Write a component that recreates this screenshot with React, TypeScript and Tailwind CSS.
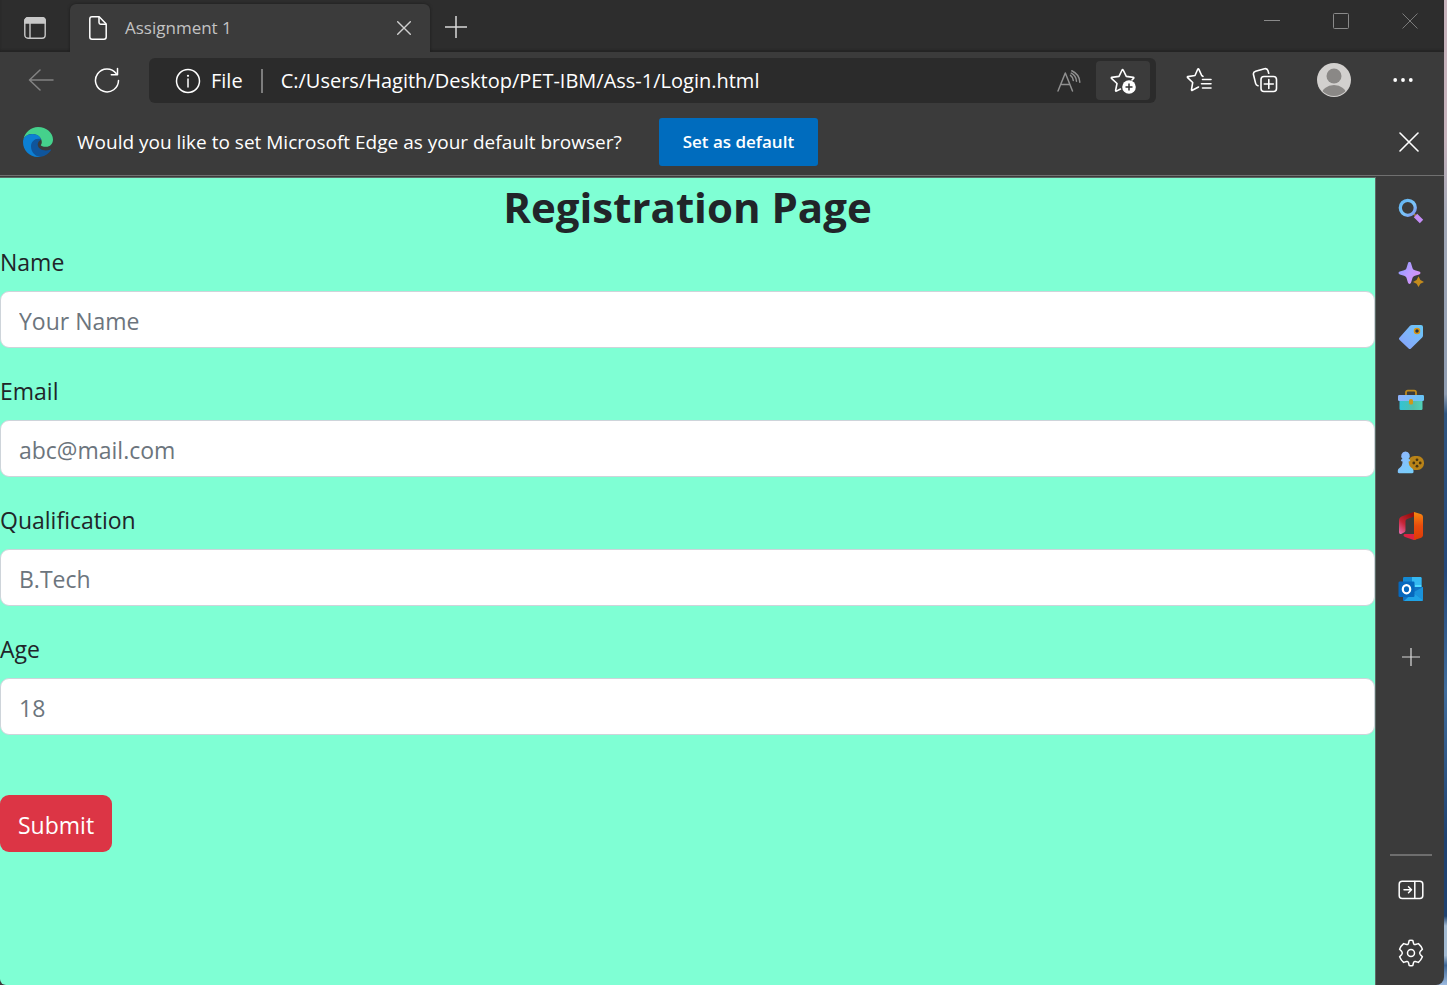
import type { ReactNode } from "react";

function TabMenuIcon() {
  return (
    <svg width="22" height="22" viewBox="0 0 22 22" fill="none" stroke="#c8c8c8" strokeWidth="1.4">
      <rect x="0.8" y="0.8" width="20.4" height="20.4" rx="3.2" />
      <path d="M0.8 6V4A3.2 3.2 0 0 1 4 .8h14A3.2 3.2 0 0 1 21.2 4v2Z" fill="#c8c8c8" />
      <path d="M6 6v15" />
    </svg>
  );
}

function FileIcon() {
  return (
    <svg width="18" height="24" viewBox="0 0 18 24" fill="none" stroke="#fff" strokeWidth="1.5" strokeLinejoin="round">
      <path d="M3 .8h7.2L17.2 8v13a2.2 2.2 0 0 1-2.2 2.2H3A2.2 2.2 0 0 1 .8 21V3A2.2 2.2 0 0 1 3 .8Z" />
      <path d="M10 1v5.5A1.7 1.7 0 0 0 11.700 8.200H17" />
    </svg>
  );
}

function Cross({ size, color, width }: { size: number; color: string; width: number }) {
  return (
    <svg width={size} height={size} viewBox="0 0 20 20" stroke={color} strokeWidth={width} strokeLinecap="round">
      <path d="M1 1l18 18M19 1L1 19" />
    </svg>
  );
}

function Plus({ size }: { size: number }) {
  return (
    <svg width={size} height={size} viewBox="0 0 22 22" stroke="#d8d8d8" strokeWidth="1.500">
      <path d="M11 0v22M0 11h22" />
    </svg>
  );
}

function BackIcon() {
  return (
    <svg width="26" height="22" viewBox="0 0 26 22" fill="none" stroke="#838383" strokeWidth="1.500" strokeLinecap="round" strokeLinejoin="round">
      <path d="M25 11H1.500M12 1L1.500 11L12 21" />
    </svg>
  );
}

function ReloadIcon() {
  return (
    <svg width="26" height="26" viewBox="0 0 26 26" fill="none" stroke="#fff" strokeWidth="1.500" strokeLinecap="round" strokeLinejoin="round">
      <path d="M24.500 13.500A11.500 11.500 0 1 1 22.200 6.500" />
      <path d="M23.500 1.500v6.200h-6.200" />
    </svg>
  );
}

function InfoIcon() {
  return (
    <svg width="26" height="26" viewBox="0 0 26 26" fill="none" stroke="#fff" strokeWidth="1.500">
      <circle cx="13" cy="13" r="11.500" />
      <path d="M13 11v8" strokeLinecap="round" />
      <circle cx="13" cy="7.800" r="1.100" fill="#fff" stroke="none" />
    </svg>
  );
}

function ReadAloudIcon() {
  return (
    <svg width="24" height="22" viewBox="0 0 24 22" fill="none" stroke="#909090" strokeWidth="1.500" strokeLinecap="round" strokeLinejoin="round">
      <path d="M1 21L8.300 3L15.500 21M3.700 14.500h9.200" />
      <path d="M13.500 5.300c1.700 1.200 2.700 3 2.800 5.200" />
      <path d="M14.800 .8c4.700 2.200 7.800 6.400 8 11.400" />
      <path d="M14.200 3.200c3.200 1.600 5 4.300 5.300 8" />
    </svg>
  );
}

function StarAddIcon() {
  return (
    <svg width="26" height="26" viewBox="0 0 26 26" fill="none">
      <path
        d="M10.500 21L6.400 23.100c-.5.200-.9 0-.8-.6L7 15.500L1.500 10.400c-.4-.4-.2-.9.300-1L9 8.400L12.100 2c.3-.5.900-.5 1.100 0L16.300 8.400L23.300 9.400c.6.1.8.6.3 1L22 12"
        stroke="#fff"
        strokeWidth="1.600"
        strokeLinecap="round"
        strokeLinejoin="round"
      />
      <circle cx="19" cy="19" r="6.800" fill="#fff" />
      <path d="M19 15.500v7M15.500 19h7" stroke="#333" strokeWidth="1.500" />
    </svg>
  );
}

function FavoritesIcon() {
  return (
    <svg width="26" height="26" viewBox="0 0 26 26" fill="none" stroke="#fff" strokeWidth="1.600" strokeLinecap="round" strokeLinejoin="round">
      <path d="M17 9.400L15.700 8.500L12.900 2.300c-.3-.6-.9-.6-1.200 0L9 8.500L1.900 9.600c-.6.100-.7.600-.3 1L6.700 15.500L5.500 22.700c-.1.600.3.900.8.600L12.500 20" />
      <path d="M16.500 12.500h8.500M15.500 16.800h9.500M16.500 21h8.500" />
    </svg>
  );
}

function CollectionsIcon() {
  return (
    <svg width="26" height="26" viewBox="0 0 26 26" fill="none" stroke="#fff" strokeWidth="1.600" strokeLinecap="round" strokeLinejoin="round">
      <rect x="9" y="9.500" width="15.500" height="15" rx="3" />
      <path d="M16.800 12.500v9M12.300 17h9" />
      <path d="M6 18.800C4.800 18.500 4 17.800 3.700 16.600L1.500 7.700C1.100 6 2 4.700 3.600 4.200L12.500 1.800c1.700-.4 3 .3 3.500 2l.7 2.500" />
    </svg>
  );
}

function Avatar() {
  return (
    <svg width="34" height="34" viewBox="0 0 34 34">
      <defs>
        <clipPath id="avatar-clip">
          <circle cx="17" cy="17" r="16" />
        </clipPath>
      </defs>
      <circle cx="17" cy="17" r="17" fill="#d2d0ce" />
      <circle cx="17" cy="13" r="7.500" fill="#8a8886" />
      <ellipse cx="17" cy="32" rx="12.500" ry="10" fill="#8a8886" clipPath="url(#avatar-clip)" />
    </svg>
  );
}

function DotsIcon() {
  return (
    <svg width="20" height="6" viewBox="0 0 20 6" fill="#fff">
      <circle cx="2.200" cy="3" r="1.900" />
      <circle cx="10" cy="3" r="1.900" />
      <circle cx="17.800" cy="3" r="1.900" />
    </svg>
  );
}

function EdgeLogo() {
  return (
    <svg width="30" height="30" viewBox="0 0 30 30">
      <path
        d="M.5 12C2 5 8 0 15 0c8.500 0 15 6 15 12.500 0 4.500-3 7.300-7 7.300-3 0-5-.6-5.200-1.500-.1-.5 1-1 1-3.300C18.800 11 15 7 9.500 7 5 7 2 9 .5 12Z"
        fill="#45d18c"
      />
      <path d="M0 15C0 10 4 7 9.500 7c5 0 8.200 3 8.700 5.700C15 11.500 9 12.500 9 19c0 6 4.500 10 9 10.700-1 .3-2 .3-3 .3C6 30 0 23 0 15Z" fill="#0c80d4" />
      <path
        d="M17.800 12.200C13 10.500 8 14 8 19.500 8 25.500 13 30.200 18 29.700c4-.7 8-3.200 10-6.500.3-.6 0-.8-.5-.6-3.500 1.400-8 1.200-10.700-1.100-2.800-2.500-2.800-6 .2-8.100Z"
        fill="#0f559c"
      />
    </svg>
  );
}

function SearchIcon() {
  return (
    <svg width="26" height="26" viewBox="0 0 26 26" fill="none">
      <defs>
        <linearGradient id="ring" x1="0" y1="0" x2="1" y2="1">
          <stop offset="0" stopColor="#5fb4f2" />
          <stop offset="0.6" stopColor="#7cc4fa" />
          <stop offset="1" stopColor="#7c8df0" />
        </linearGradient>
      </defs>
      <path d="M15.500 15.500l3 3" stroke="#9a7430" strokeWidth="2" />
      <circle cx="9.800" cy="9.800" r="7.500" stroke="url(#ring)" strokeWidth="3.300" />
      <path d="M17.500 17.500l6 6" stroke="#c48df5" strokeWidth="4.800" />
    </svg>
  );
}

function SparkleIcon() {
  return (
    <svg width="26" height="26" viewBox="0 0 26 26">
      <defs>
        <linearGradient id="spark" x1="0" y1="0.2" x2="1" y2="0.800">
          <stop offset="0" stopColor="#8a9bff" />
          <stop offset="0.500" stopColor="#bf9bff" />
          <stop offset="1" stopColor="#e08cf5" />
        </linearGradient>
      </defs>
      <path
        d="M11.500 1c.8 0 1.300.4 1.600 1.500l1.300 4.200c.5 1.500 1 2 2.500 2.500l4.300 1.400c1.700.6 1.700 2.200 0 2.800l-4.300 1.400c-1.500.5-2 1-2.500 2.500l-1.300 4.200c-.6 1.900-2.600 1.900-3.200 0l-1.300-4.200c-.5-1.500-1-2-2.500-2.500l-4.300-1.400c-1.700-.6-1.700-2.200 0-2.800l4.300-1.400c1.500-.5 2-1 2.500-2.500l1.300-4.200C10.200 1.400 10.700 1 11.500 1Z"
        fill="url(#spark)"
      />
      <path d="M20.500 15.300l1.900 3.800 3.600 1.800-3.600 1.800-1.900 3.300-1.900-3.300-3.600-1.800 3.600-1.800Z" fill="#c28a1c" />
    </svg>
  );
}

function TagIcon() {
  return (
    <svg width="26" height="26" viewBox="0 0 26 26">
      <defs>
        <linearGradient id="tag" x1="1" y1="0" x2="0" y2="1">
          <stop offset="0" stopColor="#65c8f6" />
          <stop offset="0.500" stopColor="#7fb4fa" />
          <stop offset="1" stopColor="#86a0fa" />
        </linearGradient>
      </defs>
      <path d="M14 1h9a2 2 0 0 1 2 2v8.500c0 .8-.2 1.400-.8 2L13 24.500c-.8.7-1.600.7-2.400 0L1.600 16c-.8-.8-.8-1.800 0-2.500L12 1.800C12.600 1.200 13.200 1 14 1Z" fill="url(#tag)" />
      <circle cx="19" cy="7" r="2.500" fill="#263447" stroke="#d89614" strokeWidth="1.500" />
    </svg>
  );
}

function ToolboxIcon() {
  return (
    <svg width="26" height="22" viewBox="0 0 26 22">
      <defs>
        <linearGradient id="box" x1="0" y1="0" x2="1" y2="0">
          <stop offset="0" stopColor="#2fc4d8" />
          <stop offset="0.600" stopColor="#52bfa8" />
          <stop offset="1" stopColor="#51d1b8" />
        </linearGradient>
        <linearGradient id="lid" x1="0" y1="0" x2="1" y2="0">
          <stop offset="0" stopColor="#8fb1fb" />
          <stop offset="1" stopColor="#65c4f5" />
        </linearGradient>
      </defs>
      <path d="M8 7V3.500A1.800 1.800 0 0 1 9.800 1.700h6.400A1.800 1.800 0 0 1 18 3.500V7" fill="none" stroke="#bd8a1e" strokeWidth="1.800" />
      <rect x="1.500" y="9" width="23" height="12" rx="1.200" fill="url(#box)" />
      <rect x="0" y="6" width="26" height="6" rx="1.200" fill="url(#lid)" />
      <rect x="11" y="10" width="4" height="5.500" rx="1.500" fill="#cf971b" />
    </svg>
  );
}

function GamesIcon() {
  return (
    <svg width="28" height="24" viewBox="0 0 28 24">
      <defs>
        <linearGradient id="pawn" x1="0" y1="0" x2="0.600" y2="1">
          <stop offset="0" stopColor="#91b4ff" />
          <stop offset="1" stopColor="#78cdfa" />
        </linearGradient>
      </defs>
      <rect x="11" y="5" width="16" height="14" rx="6.500" fill="#b98318" />
      <g fill="#473613">
        <circle cx="20" cy="8.800" r="1.400" />
        <circle cx="16.800" cy="12" r="1.400" />
        <circle cx="23.200" cy="12" r="1.400" />
        <circle cx="20" cy="15.200" r="1.400" />
      </g>
      <path
        d="M8.500.5a4.300 4.300 0 0 1 3 7.400c1.200.1 1.700.7 1.700 1.300 0 .7-.6 1.200-1.600 1.300.2 3.500 1.200 5.300 3.400 6.800 1 .8 1.500 1.700 1.500 3v.7c0 .7-.5 1.200-1.200 1.200H2c-.7 0-1.200-.5-1.200-1.200v-.7c0-1.300.4-2.200 1.400-3 2.200-1.500 3.200-3.300 3.400-6.800C4.500 10.400 4 9.900 4 9.200s.5-1.200 1.500-1.300a4.300 4.300 0 0 1 3-7.400Z"
        fill="url(#pawn)"
      />
    </svg>
  );
}

function OfficeIcon() {
  return (
    <svg width="26" height="28" viewBox="0 0 26 28">
      <defs>
        <linearGradient id="office-right" x1="0" y1="0" x2="0" y2="1">
          <stop offset="0" stopColor="#f88a10" />
          <stop offset="0.500" stopColor="#e84b0c" />
          <stop offset="1" stopColor="#dc3a08" />
        </linearGradient>
        <linearGradient id="office-left" x1="0.600" y1="0" x2="0" y2="1">
          <stop offset="0" stopColor="#96100e" />
          <stop offset="0.500" stopColor="#c42536" />
          <stop offset="1" stopColor="#ea6fb5" />
        </linearGradient>
      </defs>
      <path d="M16 0L4 4.300C2 5.200 1 6.500 1 8.500v11.200c0 1.600.8 2.600 2.200 2.300L6 20.500c1.200-.7 1.500-1.300 1.500-2.500V9.500c0-1.300.5-2.100 1.700-2.600L16 4.500Z" fill="url(#office-left)" />
      <path d="M6.500 22H17l1 5.500c-1 .5-2 .5-3 .2l-8-2.700c-1.800-.6-2-2.600-.5-3Z" fill="#dc2244" />
      <path d="M16 0l6.600 2C24.300 2.600 25 3.600 25 5.300v17.400c0 1.700-.8 2.600-2.400 3.200L16 28Z" fill="url(#office-right)" />
    </svg>
  );
}

function OutlookIcon() {
  return (
    <svg width="26" height="26" viewBox="0 0 26 26">
      <rect x="5" y="1" width="18.500" height="17" rx="1.200" fill="#1489d2" />
      <path d="M14 1h8.300c.7 0 1.200.5 1.200 1.200V9H14Z" fill="#35b8f1" />
      <path d="M16.500 9h7v6l-7 2Z" fill="#50d9ff" />
      <path d="M5 11h20v12.700c0 .8-.5 1.300-1.300 1.300H6.300c-.8 0-1.300-.5-1.300-1.300Z" fill="#1074c4" />
      <path d="M15 16.500L25 11v13Z" fill="#1a92da" />
      <path d="M6 25l9-8.500L25 24c-.3.700-.8 1-1.300 1Z" fill="#1fa3e6" />
      <rect x="0.500" y="5.500" width="16" height="15.500" rx="1.200" fill="#0668bd" />
      <ellipse cx="8.500" cy="13.200" rx="3.700" ry="4.100" fill="none" stroke="#fff" strokeWidth="2.200" />
    </svg>
  );
}

function HidePanelIcon() {
  return (
    <svg width="26" height="20" viewBox="0 0 26 20" fill="none" stroke="#fff" strokeWidth="1.500" strokeLinecap="round" strokeLinejoin="round">
      <rect x="1.200" y="1.200" width="23.600" height="17.200" rx="3" />
      <path d="M16.800 1.500v16.500M6 9.800h7.500M10.500 6.800l3 3-3 3" />
    </svg>
  );
}

function GearIcon() {
  return (
    <svg width="26" height="28" viewBox="0 0 26 28" fill="none" stroke="#fff" strokeWidth="1.500" strokeLinejoin="round">
      <path d="M11.200 1.500Q13 1.100 14.800 1.500L15.600 4.600Q16 5.900 17.300 5.500L20.400 4.600Q22.900 6.600 24.400 10.200L22.200 12.600Q21.100 14 22.200 15.400L24.400 17.800Q22.900 21.400 20.400 23.400L17.300 22.500Q16 22.100 15.600 23.400L14.800 26.500Q13 26.900 11.200 26.500L10.400 23.400Q10 22.100 8.700 22.500L5.600 23.400Q3.100 21.400 1.600 17.800L3.800 15.400Q4.900 14 3.800 12.600L1.600 10.200Q3.100 6.600 5.600 4.600L8.700 5.500Q10 5.900 10.400 4.600Z" />
      <circle cx="13" cy="14" r="3.500" />
    </svg>
  );
}

function IconButton({ label, className, children }: { label: string; className: string; children: ReactNode }) {
  return (
    <button type="button" aria-label={label} className={`flex shrink-0 items-center justify-center ${className}`}>
      {children}
    </button>
  );
}

const fields = [
  { id: "name", label: "Name", type: "text", placeholder: "Your Name" },
  { id: "email", label: "Email", type: "email", placeholder: "abc@mail.com" },
  { id: "qualification", label: "Qualification", type: "text", placeholder: "B.Tech" },
  { id: "age", label: "Age", type: "text", placeholder: "18" },
];

const apps = [
  { label: "Search", icon: <SearchIcon /> },
  { label: "Discover", icon: <SparkleIcon /> },
  { label: "Shopping", icon: <TagIcon /> },
  { label: "Tools", icon: <ToolboxIcon /> },
  { label: "Games", icon: <GamesIcon /> },
  { label: "Office", icon: <OfficeIcon /> },
  { label: "Outlook", icon: <OutlookIcon /> },
];

function TitleBar() {
  return (
    <header className="flex h-[52px] items-end bg-[#2d2d2d] shadow-[inset_0_-2px_2px_#242424]">
      <IconButton label="Tab actions menu" className="h-12 w-[70px]">
        <TabMenuIcon />
      </IconButton>
      <div className="flex h-12 w-[360px] items-center rounded-t-md bg-[#3b3b3b] pr-4 pl-[19px] shadow-[0_0_3px_#1c1c1c] [clip-path:inset(-4px_-4px_0_-4px)]">
        <FileIcon />
        <span className="ml-[18px] flex-1 text-[17px] leading-6 text-[#c3c3c3]">Assignment 1</span>
        <IconButton label="Close tab" className="size-5">
          <Cross size={14} color="#d0d0d0" width={2} />
        </IconButton>
      </div>
      <IconButton label="New tab" className="h-[50px] w-[52px]">
        <Plus size={22} />
      </IconButton>
      <div className="ml-auto flex self-start">
        <IconButton label="Minimize" className="h-[42px] w-[69px]">
          <svg width="16" height="16" viewBox="0 0 16 16" stroke="#8a8a8a">
            <path d="M0 7.500h16" />
          </svg>
        </IconButton>
        <IconButton label="Maximize" className="h-[42px] w-[69px]">
          <svg width="16" height="16" viewBox="0 0 16 16" fill="none" stroke="#8a8a8a">
            <rect x="0.500" y="0.500" width="15" height="15" rx="1" />
          </svg>
        </IconButton>
        <IconButton label="Close window" className="h-[42px] w-[69px]">
          <Cross size={16} color="#808080" width={1.2} />
        </IconButton>
      </div>
    </header>
  );
}

function Toolbar() {
  return (
    <div className="flex h-[57px] items-start px-2 pt-1.5">
      <IconButton label="Back" className="h-11 w-[66px]">
        <BackIcon />
      </IconButton>
      <IconButton label="Refresh" className="h-11 w-[66px]">
        <ReloadIcon />
      </IconButton>
      <div className="ml-[9px] flex h-[45px] min-w-0 flex-1 items-center rounded-md bg-[#2b2b2b] pr-1.5 pl-[26px] text-[20px] leading-7 text-white">
        <InfoIcon />
        <label htmlFor="address" className="ml-2.5 border-r-2 border-[#7d7d7d] pr-[18px] leading-6">
          File
        </label>
        <input
          id="address"
          type="text"
          defaultValue="C:/Users/Hagith/Desktop/PET-IBM/Ass-1/Login.html"
          className="ml-[18px] min-w-0 flex-1 bg-transparent outline-none"
        />
        <IconButton label="Read aloud" className="h-10 w-[54px]">
          <ReadAloudIcon />
        </IconButton>
        <IconButton label="Add to favorites" className="h-[39px] w-[54px] rounded bg-[#3b3b3b]">
          <StarAddIcon />
        </IconButton>
      </div>
      <IconButton label="Favorites" className="ml-2.5 h-11 w-[66px]">
        <FavoritesIcon />
      </IconButton>
      <IconButton label="Collections" className="h-11 w-[66px]">
        <CollectionsIcon />
      </IconButton>
      <IconButton label="Profile" className="h-11 w-[72px]">
        <Avatar />
      </IconButton>
      <IconButton label="Settings and more" className="h-11 w-[66px]">
        <DotsIcon />
      </IconButton>
    </div>
  );
}

function DefaultBrowserBar() {
  return (
    <div className="flex h-[67px] items-center border-b border-[#707070] pr-[15px] pl-[23px] text-white">
      <EdgeLogo />
      <p className="ml-6 text-[19px] leading-7">Would you like to set Microsoft Edge as your default browser?</p>
      <button type="button" className="ml-[37px] h-12 rounded-[3px] bg-[#006cbe] px-6 text-[17px] leading-6 font-semibold">
        Set as default
      </button>
      <IconButton label="Dismiss" className="ml-auto size-10">
        <Cross size={20} color="#ffffff" width={1.6} />
      </IconButton>
    </div>
  );
}

function RegistrationForm() {
  return (
    <main className="min-w-0 flex-1 rounded-bl-md border-t border-r border-[#5c6b66] bg-[#7fffd4] text-[#212529]">
      <h1 className="mb-3 pt-1 text-center text-[42px] leading-[49px] font-bold">Registration Page</h1>
      <form className="text-[23px] leading-[34px]">
        {fields.map((field) => (
          <div key={field.id} className="mb-6">
            <label htmlFor={field.id} className="mb-3 block pt-0.5">
              {field.label}
            </label>
            <input
              id={field.id}
              type={field.type}
              placeholder={field.placeholder}
              className="block h-[57px] w-full rounded-[9px] border border-[#ced4da] bg-white px-[18px] pt-0.5 placeholder:text-[#6c757d]"
            />
          </div>
        ))}
        <button type="submit" className="mt-9 h-[57px] rounded-[9px] bg-[#dc3545] px-[18px] pt-0.5 text-white">
          Submit
        </button>
      </form>
    </main>
  );
}

function Sidebar() {
  return (
    <aside className="flex w-[68px] shrink-0 flex-col items-center pt-0.5 pb-px pl-0.5">
      {apps.map((app) => (
        <IconButton key={app.label} label={app.label} className="h-[63px] w-full">
          {app.icon}
        </IconButton>
      ))}
      <IconButton label="Customize sidebar" className="h-[74px] w-full">
        <Plus size={18} />
      </IconButton>
      <div className="mt-auto h-0.5 w-[42px] bg-[#6e6e6e]" />
      <IconButton label="Hide sidebar" className="mt-[3px] h-[62px] w-full">
        <HidePanelIcon />
      </IconButton>
      <IconButton label="Settings" className="h-[63px] w-full">
        <GearIcon />
      </IconButton>
    </aside>
  );
}

export default function App() {
  return (
    <div className="flex min-h-screen bg-[linear-gradient(#c8b4bd_0%,#c8b4bd_14%,#a3a9b8_22%,#8f9db2_40%,#2f5580_42%,#24487a_58%,#3f6c9c_70%,#1f4270_85%,#1f4270_93%,#a3bbd3_94%,#a3bbd3_97%,#3c6595_98%,#9dbbe0_100%)] pr-[3px] font-['Open_Sans','Noto_Sans',sans-serif]">
      <div className="flex min-w-0 flex-1 flex-col rounded-br-lg bg-[#3b3b3b]">
        <TitleBar />
        <Toolbar />
        <DefaultBrowserBar />
        <div className="mt-px flex flex-1">
          <RegistrationForm />
          <Sidebar />
        </div>
      </div>
    </div>
  );
}
